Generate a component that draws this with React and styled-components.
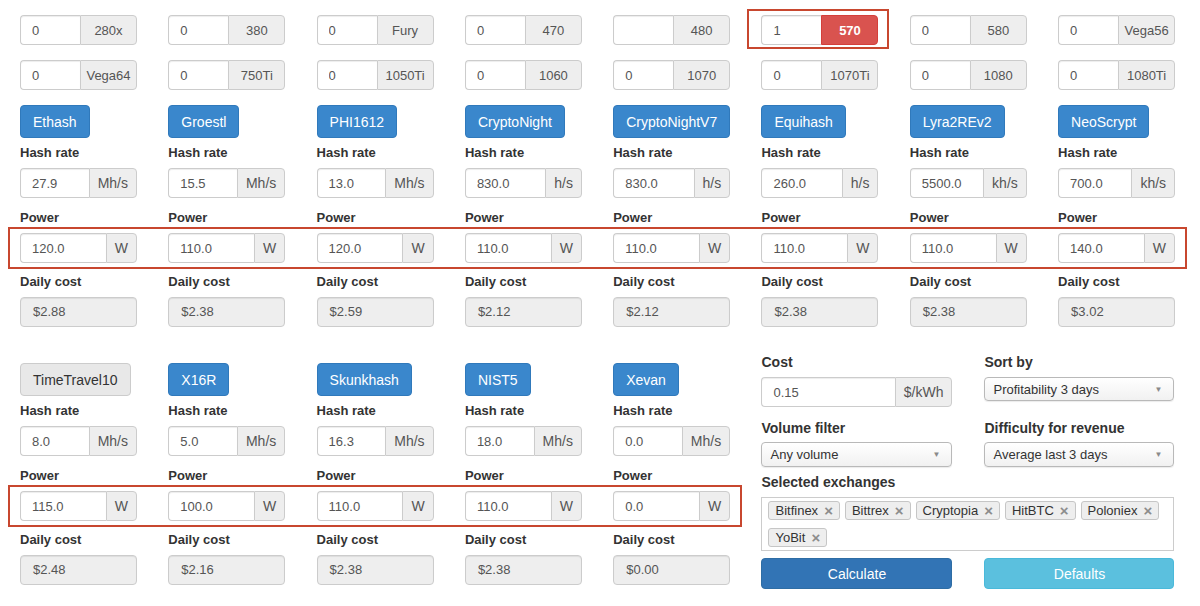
import React from "react";
import styled, { createGlobalStyle } from "styled-components";

const Global = createGlobalStyle`
  html, body { margin: 0; padding: 0; background: #fff; }
  body { font-family: "Liberation Sans", Arial, Helvetica, sans-serif; color: #333; font-size: 13px; }
  * { box-sizing: border-box; }
`;

const Page = styled.div`
  width: 1200px;
  height: 606px;
  overflow: hidden;
  padding: 15px 25px 0 20px;
`;

const Grid = styled.div`
  display: grid;
  grid-template-columns: repeat(${(p) => p.$cols || 8}, 117px);
  column-gap: 31.3px;
  margin-top: ${(p) => p.$mt || 0}px;
  align-items: start;
`;

const Highlight = styled.div`
  border: 2px solid #c8472f;
  margin: ${(p) => p.$mt || 0}px -12px 0 -12px;
  padding: 4px ${(p) => p.$pr || 10}px 4px 10px;
`;

const CellHighlight = styled.div`
  border: 2px solid #c8472f;
  margin: -6px -11px -4px -14px;
  padding: 4px 9px 2px 12px;
`;

const Group = styled.div`
  display: flex;
  height: ${(p) => p.$h || 30}px;
  width: 100%;
`;

const Field = styled.input`
  flex: 1;
  min-width: 0;
  height: 100%;
  border: 1px solid #ccc;
  border-right: none;
  border-radius: 4px 0 0 4px;
  padding: 0 11px;
  font: 13px "Liberation Sans", Arial, sans-serif;
  color: #555;
  background: #fff;
  box-shadow: inset 0 1px 1px rgba(0, 0, 0, 0.075);
  outline: none;
`;

const Addon = styled.span`
  display: flex;
  align-items: center;
  justify-content: center;
  flex: none;
  width: ${(p) => (p.$w ? `${p.$w}px` : "auto")};
  padding: 0 ${(p) => (p.$w ? 2 : 8)}px;
  border: 1px solid ${(p) => (p.$danger ? "#d43f3a" : "#ccc")};
  border-radius: 0 4px 4px 0;
  background: ${(p) => (p.$danger ? "#d9534f" : "#eee")};
  color: ${(p) => (p.$danger ? "#fff" : "#555")};
  font-size: ${(p) => p.$fs || 13}px;
  font-weight: ${(p) => (p.$danger ? "bold" : "normal")};
  white-space: nowrap;
`;

const ReadOnly = styled.div`
  height: 30px;
  line-height: 28px;
  border: 1px solid #ccc;
  border-radius: 4px;
  background: #eee;
  color: #555;
  padding: 0 12px;
  font-size: 13px;
  box-shadow: inset 0 1px 1px rgba(0, 0, 0, 0.075);
`;

const AlgoButton = styled.button`
  justify-self: start;
  height: 33px;
  padding: 0 12px;
  border-radius: 4px;
  font: 14px "Liberation Sans", Arial, sans-serif;
  border: 1px solid ${(p) => (p.$off ? "#ccc" : "#3079bb")};
  background: ${(p) => (p.$off ? "#e8e8e8" : "#3a87cc")};
  color: ${(p) => (p.$off ? "#333" : "#fff")};
  cursor: pointer;
`;

const Label = styled.div`
  font-weight: bold;
  font-size: ${(p) => p.$fs || 13}px;
  line-height: 16px;
  color: #333;
  margin-top: ${(p) => p.$mt || 0}px;
  white-space: nowrap;
`;

const Section2 = styled.div`
  display: flex;
  align-items: flex-start;
  column-gap: 31.3px;
  margin-top: 27px;
`;

const LeftBlock = styled.div`
  padding-top: 9px;
  width: 710.2px;
`;

const Panel = styled.div`
  display: flex;
  flex-direction: column;
  width: 413px;
`;

const Pair = styled.div`
  display: grid;
  grid-template-columns: 191px 190px;
  column-gap: 32px;
  align-items: start;
  margin-top: ${(p) => p.$mt || 0}px;
`;

const FakeSelect = styled.div`
  height: ${(p) => p.$h || 24}px;
  display: flex;
  align-items: center;
  justify-content: space-between;
  padding: 0 11px 0 8px;
  border: 1px solid #b9b9b9;
  border-radius: 4px;
  background: linear-gradient(#ffffff, #f1f1f1);
  box-shadow: 0 1px 1px rgba(0, 0, 0, 0.08);
  font-size: 13px;
  color: #333;
`;

const Caret = styled.span`
  font-size: 8px;
  color: #8a8a8a;
`;

const TagBox = styled.div`
  margin-top: 7px;
  height: 54px;
  border: 1px solid #ccc;
  padding: 3px 6px;
  display: flex;
  flex-wrap: wrap;
  align-content: flex-start;
  column-gap: 5px;
  row-gap: 8px;
`;

const Tag = styled.span`
  display: inline-flex;
  align-items: center;
  gap: 6px;
  height: 19px;
  padding: 0 6px;
  border: 1px solid #c6c6c6;
  border-radius: 3px;
  background: #eeeeee;
  font-size: 13px;
  color: #333;
`;

const TagX = styled.span`
  font-weight: bold;
  font-size: 15px;
  color: #8c8c8c;
  line-height: 1;
`;

const ActionButton = styled.button`
  height: 31px;
  border-radius: 4px;
  font: 14px "Liberation Sans", Arial, sans-serif;
  color: #fff;
  border: 1px solid ${(p) => (p.$info ? "#4ab9da" : "#2e6da4")};
  background: ${(p) => (p.$info ? "#5bc0de" : "#3274b5")};
  cursor: pointer;
`;

const gpus1 = [
  ["0", "280x"],
  ["0", "380"],
  ["0", "Fury"],
  ["0", "470"],
  ["", "480"],
  ["1", "570", true],
  ["0", "580"],
  ["0", "Vega56"],
];
const gpus2 = [
  ["0", "Vega64"],
  ["0", "750Ti"],
  ["0", "1050Ti"],
  ["0", "1060"],
  ["0", "1070"],
  ["0", "1070Ti"],
  ["0", "1080"],
  ["0", "1080Ti"],
];

const algos1 = [
  { name: "Ethash", hr: "27.9", unit: "Mh/s", pw: "120.0", cost: "$2.88" },
  { name: "Groestl", hr: "15.5", unit: "Mh/s", pw: "110.0", cost: "$2.38" },
  { name: "PHI1612", hr: "13.0", unit: "Mh/s", pw: "120.0", cost: "$2.59" },
  { name: "CryptoNight", hr: "830.0", unit: "h/s", pw: "110.0", cost: "$2.12" },
  { name: "CryptoNightV7", hr: "830.0", unit: "h/s", pw: "110.0", cost: "$2.12" },
  { name: "Equihash", hr: "260.0", unit: "h/s", pw: "110.0", cost: "$2.38" },
  { name: "Lyra2REv2", hr: "5500.0", unit: "kh/s", pw: "110.0", cost: "$2.38" },
  { name: "NeoScrypt", hr: "700.0", unit: "kh/s", pw: "140.0", cost: "$3.02" },
];
const algos2 = [
  { name: "TimeTravel10", off: true, hr: "8.0", unit: "Mh/s", pw: "115.0", cost: "$2.48" },
  { name: "X16R", hr: "5.0", unit: "Mh/s", pw: "100.0", cost: "$2.16" },
  { name: "Skunkhash", hr: "16.3", unit: "Mh/s", pw: "110.0", cost: "$2.38" },
  { name: "NIST5", hr: "18.0", unit: "Mh/s", pw: "110.0", cost: "$2.38" },
  { name: "Xevan", hr: "0.0", unit: "Mh/s", pw: "0.0", cost: "$0.00" },
];

const exchanges = ["Bitfinex", "Bittrex", "Cryptopia", "HitBTC", "Poloniex", "YoBit"];

function GpuCell({ value, name, danger }) {
  const group = (
    <Group>
      <Field defaultValue={value} />
      <Addon $w={57} $fs={13} $danger={danger}>
        {name}
      </Addon>
    </Group>
  );
  return danger ? <CellHighlight>{group}</CellHighlight> : <div>{group}</div>;
}

function AlgoBlock({ algos, cols, pr }) {
  return (
    <>
      <Grid $cols={cols}>
        {algos.map((a) => (
          <AlgoButton key={a.name} $off={a.off}>
            {a.name}
          </AlgoButton>
        ))}
      </Grid>
      <Grid $cols={cols} $mt={7}>
        {algos.map((a) => (
          <Label key={a.name}>Hash rate</Label>
        ))}
      </Grid>
      <Grid $cols={cols} $mt={7}>
        {algos.map((a) => (
          <Group key={a.name}>
            <Field defaultValue={a.hr} />
            <Addon $fs={14}>{a.unit}</Addon>
          </Group>
        ))}
      </Grid>
      <Grid $cols={cols} $mt={12}>
        {algos.map((a) => (
          <Label key={a.name}>Power</Label>
        ))}
      </Grid>
      <Highlight $mt={1} $pr={pr}>
        <Grid $cols={cols}>
          {algos.map((a) => (
            <Group key={a.name}>
              <Field defaultValue={a.pw} />
              <Addon $fs={14}>W</Addon>
            </Group>
          ))}
        </Grid>
      </Highlight>
      <Grid $cols={cols} $mt={5}>
        {algos.map((a) => (
          <Label key={a.name}>Daily cost</Label>
        ))}
      </Grid>
      <Grid $cols={cols} $mt={7}>
        {algos.map((a) => (
          <ReadOnly key={a.name}>{a.cost}</ReadOnly>
        ))}
      </Grid>
    </>
  );
}

export default function App() {
  return (
    <Page>
      <Global />
      <Grid>
        {gpus1.map(([v, n, d]) => (
          <GpuCell key={n} value={v} name={n} danger={d} />
        ))}
      </Grid>
      <Grid $mt={15}>
        {gpus2.map(([v, n]) => (
          <GpuCell key={n} value={v} name={n} />
        ))}
      </Grid>
      <Grid $mt={15} />
      <AlgoBlock algos={algos1} cols={8} />
      <Section2>
        <LeftBlock>
          <AlgoBlock algos={algos2} cols={5} pr={13} />
        </LeftBlock>
        <Panel>
          <Pair>
            <Label $fs={14}>Cost</Label>
            <Label $fs={14}>Sort by</Label>
          </Pair>
          <Pair $mt={7}>
            <Group>
              <Field defaultValue="0.15" />
              <Addon $fs={14}>$/kWh</Addon>
            </Group>
            <FakeSelect>
              Profitability 3 days
              <Caret>▼</Caret>
            </FakeSelect>
          </Pair>
          <Pair $mt={13}>
            <Label $fs={14}>Volume filter</Label>
            <Label $fs={14}>Difficulty for revenue</Label>
          </Pair>
          <Pair $mt={6}>
            <FakeSelect $h={25}>
              Any volume
              <Caret>▼</Caret>
            </FakeSelect>
            <FakeSelect $h={25}>
              Average last 3 days
              <Caret>▼</Caret>
            </FakeSelect>
          </Pair>
          <Label $fs={14} $mt={7}>
            Selected exchanges
          </Label>
          <TagBox>
            {exchanges.map((e) => (
              <Tag key={e}>
                {e}
                <TagX>×</TagX>
              </Tag>
            ))}
          </TagBox>
          <Pair $mt={7}>
            <ActionButton>Calculate</ActionButton>
            <ActionButton $info>Defaults</ActionButton>
          </Pair>
        </Panel>
      </Section2>
    </Page>
  );
}
